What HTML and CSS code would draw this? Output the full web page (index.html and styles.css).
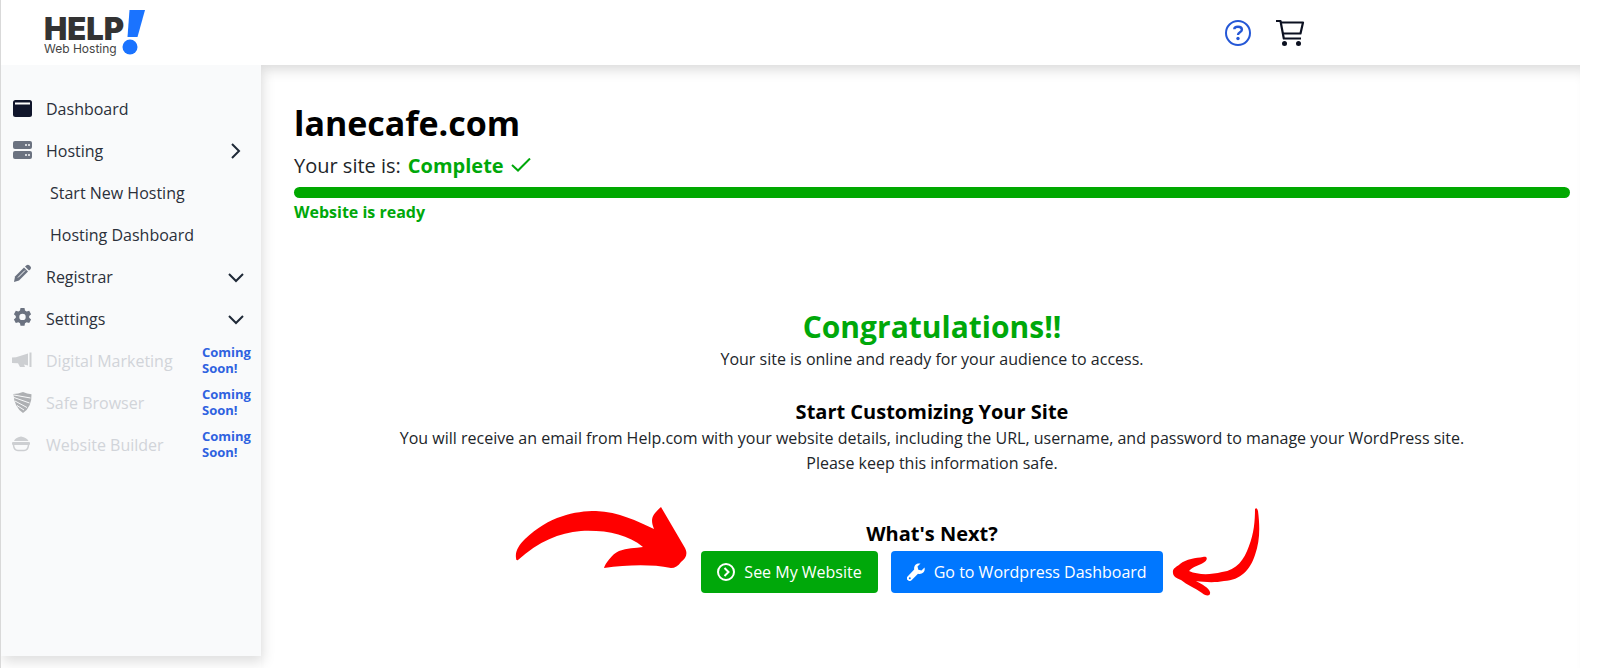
FILE: index.html
```html
<!DOCTYPE html>
<html lang="en">
<head>
<meta charset="utf-8">
<meta name="viewport" content="width=device-width, initial-scale=1">
<title>Help Web Hosting - lanecafe.com</title>
<link rel="stylesheet" href="styles.css">
</head>
<body>
<div class="app">
  <header class="topbar">
    <a class="logo" href="#" aria-label="HELP! Web Hosting">
      <span class="logo-words">
        <span class="logo-name">HELP</span>
        <span class="logo-sub">Web Hosting</span>
      </span>
      <svg class="logo-mark" viewBox="0 0 24 46" width="24" height="46" aria-hidden="true">
        <path d="M7.500 0H23L15.500 27H5.500z"/>
        <circle cx="8" cy="37" r="7.500"/>
      </svg>
    </a>
    <nav class="tools" aria-label="Account">
      <a class="tool tool-help" href="#" aria-label="Help">
        <svg viewBox="0 0 26 26" width="26" height="26" fill="none" stroke="currentColor" stroke-width="2">
          <circle cx="13" cy="13" r="12"/>
          <path d="M9.300 9.300C9.300 7.200 11 6.800 13 6.800s3.900.8 3.900 2.900c0 2.600-3.900 2.600-3.900 5.200" stroke-width="2.400"/>
          <circle cx="13" cy="18.500" r="1.700" fill="currentColor" stroke="none"/>
        </svg>
      </a>
      <a class="tool" href="#" aria-label="Cart">
        <svg viewBox="0 0 30 28" width="30" height="28" fill="none" stroke="currentColor" stroke-width="2.200" stroke-linejoin="round">
          <path d="M1 2H5.500L8.800 19.500H26"/>
          <path d="M6 3.500H28L25.500 14.500H7.800"/>
          <circle cx="9.500" cy="24.500" r="2.500" fill="currentColor" stroke="none"/>
          <circle cx="23.500" cy="24.500" r="2.500" fill="currentColor" stroke="none"/>
        </svg>
      </a>
    </nav>
  </header>

  <div class="body">
    <div class="side">
    <nav class="sidebar" aria-label="Main">
      <a class="item" href="#">
        <svg class="icon icon-dark" viewBox="0 0 20 20" width="20" height="20"><rect x="1" y="1" width="19" height="17" rx="2.500"/><path d="M3 3.500H18V5.500H3z" fill="#fff"/></svg>
        <span>Dashboard</span>
      </a>
      <a class="item" href="#">
        <svg class="icon" viewBox="0 0 20 20" width="20" height="20"><rect x="1" y="0" width="19" height="8" rx="2"/><rect x="1" y="10" width="19" height="8" rx="2"/><g fill="#f9fafb"><circle cx="14" cy="4" r="1"/><circle cx="17" cy="4" r="1"/><circle cx="14" cy="14" r="1"/><circle cx="17" cy="14" r="1"/></g></svg>
        <span>Hosting</span>
        <svg class="chevron" viewBox="0 0 16 16" width="16" height="16"><path d="M4 1l7 7-7 7"/></svg>
      </a>
      <a class="item item-sub" href="#"><span>Start New Hosting</span></a>
      <a class="item item-sub" href="#"><span>Hosting Dashboard</span></a>
      <a class="item" href="#">
        <svg class="icon" viewBox="0 0 20 20" width="20" height="20"><g transform="translate(0 -3)"><path d="M3 12.500L12 3.500L16 7.500L7 16.500L2 18z"/><path d="M13 2.500L14.500 1.200Q16 0 17.500 1.500L18.300 2.300Q19.800 3.800 18.500 5.200L17 6.500z"/><path d="M6 13.500L13 6.500" stroke="#f9fafb"/></g></svg>
        <span>Registrar</span>
        <svg class="chevron" viewBox="0 0 16 16" width="16" height="16"><path d="M1 5l7 7 7-7"/></svg>
      </a>
      <a class="item" href="#">
        <svg class="icon" viewBox="0 0 20 20" width="20" height="20"><path transform="translate(0 -2)" fill-rule="evenodd" d="M8.500 1h4l.5 2.600 1.600 1L17.200 3.800l1.900 3.400L17.200 9v1.800l1.900 1.800-1.900 3.400-2.600-.8-1.600 1-.5 2.600h-4L8 16.200l-1.600-1-2.600.8-1.900-3.400 1.900-1.800V9L1.900 7.200l1.900-3.400 2.600.8L8 3.600zM10.500 6.700a3.200 3.200 0 1 0 0 6.400a3.200 3.200 0 1 0 0-6.400z"/></svg>
        <span>Settings</span>
        <svg class="chevron" viewBox="0 0 16 16" width="16" height="16"><path d="M1 5l7 7 7-7"/></svg>
      </a>
      <a class="item item-off" href="#" aria-disabled="true">
        <svg class="icon" viewBox="0 0 20 20" width="20" height="20"><path d="M0 6.500L4 6.200L16 2.500V14.500L12 13.500L13 16H8L6 12.300L0 12zM17.500 1.500H19.500V16H17.500z"/></svg>
        <span>Digital Marketing</span>
        <strong class="soon">Coming Soon!</strong>
      </a>
      <a class="item item-off" href="#" aria-disabled="true">
        <svg class="icon icon-shield" viewBox="0 0 20 22" width="20" height="22"><g transform="translate(0 -1)"><path d="M1.500 3Q6 3 11 1Q15 3 19.500 3.300Q20 16 11 22Q2 16 1.500 3z"/><path d="M2 4L18.500 7M2 6.500L17.500 12M3 10L15 16.500M5 14.500L12 19" stroke="#f9fafb" fill="none"/></g></svg>
        <span>Safe Browser</span>
        <strong class="soon">Coming Soon!</strong>
      </a>
      <a class="item item-off" href="#" aria-disabled="true">
        <svg class="icon" viewBox="0 0 20 20" width="20" height="20"><path d="M2 6Q3 2.500 9 1.500Q15 2.500 16.500 6z"/><rect x="0" y="7" width="18" height="3" rx="1"/><path d="M1.500 10Q2 15.500 6 15.500H12Q16 15.500 16.500 10" fill="none" stroke="currentColor" stroke-width="1.500"/></svg>
        <span>Website Builder</span>
        <strong class="soon">Coming Soon!</strong>
      </a>
    </nav>
    </div>

    <main class="main">
      <h1 class="domain">lanecafe.com</h1>
      <p class="status">Your site is: <strong class="done">Complete</strong>
        <svg class="tick" viewBox="0 0 20 16" width="20" height="16" fill="none" stroke="currentColor" stroke-width="2"><path d="M1 7l6 5.500L19 .5"/></svg>
      </p>
      <div class="progress" role="progressbar" aria-label="Setup progress" aria-valuenow="100" aria-valuemin="0" aria-valuemax="100"></div>
      <p class="ready">Website is ready</p>

      <section class="result">
        <h2 class="congrats">Congratulations!!</h2>
        <p class="text">Your site is online and ready for your audience to access.</p>
        <h3 class="heading">Start Customizing Your Site</h3>
        <p class="text">You will receive an email from Help.com with your website details, including the URL, username, and password to manage your WordPress site.<br>Please keep this information safe.</p>
        <h3 class="heading heading-next">What's Next?</h3>
        <div class="actions">
          <button class="btn btn-green" type="button">
            <svg viewBox="0 0 18 18" width="18" height="18" fill="none" stroke="currentColor" stroke-width="2"><circle cx="9" cy="9" r="8"/><path d="M7.500 5l4 4-4 4"/></svg>
            See My Website
          </button>
          <button class="btn btn-blue" type="button">
            <svg viewBox="0 0 18 18" width="18" height="18" fill="currentColor"><path d="M17.500 4.500L14.500 7.500L11.300 6.700L10.500 3.500L13.500.6C10 -.4 6.500 2 7.200 6.500L.8 13.200A2.400 2.400 0 0 0 4.500 17.200L11 10.700C15.500 11.700 18.600 8.500 17.500 4.500zM2.800 14.200a1 1 0 1 1 0 2a1 1 0 1 1 0-2z" fill-rule="evenodd"/></svg>
            Go to Wordpress Dashboard
          </button>
          <svg class="arrow arrow-left" viewBox="0 0 172 64" width="172" height="64" aria-hidden="true"><path d="M1 51C0 44 4 38 10 32C34 9 60 4 81 4C104 5 122 14 139 22C135 12 137 8 146 0L170 41C173 47 171 51 166 55C163 59 160 61 156 61C135 57 112 58 89 61C90 57 97 47 104 44C112 41 120 41 128 40C112 27 91 23 66 24C44 26 24 34 3 53Q1 54 1 51z"/></svg>
          <svg class="arrow arrow-right" viewBox="0 0 88 90" width="88" height="90" aria-hidden="true"><path d="M83 1Q85-1 86 3C88 19 88 33 83 47C78 62 69 72 52 73C42 75 32 74 24 73C30 76 37 80 38 84C39 89 33 88 30 85C23 80 15 77 9 72C4 70 1 68 1 65C0 60 5 59 8 56C14 51 24 50 31 49C37 48 35 53 31 55C26 58 22 58 17 63C26 67 38 67 50 64C65 62 72 52 77 38C82 25 83 13 83 1z"/></svg>
        </div>
      </section>
    </main>
  </div>
</div>
</body>
</html>
```
FILE: styles.css
```css
* { box-sizing: border-box; }

body {
  margin: 0;
  background: #fff;
  color: #212529;
  font-family: "Open Sans", "Noto Sans", sans-serif;
  font-size: 16px;
  line-height: 25px;
}

h1, h2, h3, p { margin: 0; }
a { color: inherit; text-decoration: none; }
svg { flex: none; display: block; }

.app {
  display: flex;
  flex-direction: column;
  min-height: 100vh;
  margin-right: 20px;
  border-left: 1px solid #d9d9d9;
}

.topbar {
  display: flex;
  align-items: center;
  justify-content: space-between;
  height: 65px;
  padding: 0 275px 0 43px;
}

.logo { display: flex; align-items: flex-start; }
.logo-words { display: flex; flex-direction: column; padding-top: 5px; }
.logo-name {
  color: #333;
  font-family: Inter, sans-serif;
  font-size: 31px;
  font-weight: 900;
  line-height: 28px;
}
.logo-sub {
  color: #444;
  font-family: Inter, sans-serif;
  font-size: 12px;
  line-height: 12px;
}
.logo-mark { margin-left: -2px; fill: #1a73ff; }

.tools { display: flex; align-items: center; gap: 24px; color: #0b1020; }
.tool-help { color: #2457d6; }

.body { display: flex; flex: 1; }

.side { display: flex; flex: none; width: 260px; padding-bottom: 12px; }
.sidebar {
  width: 100%;
  padding: 23px 0;
  background: #f9fafb;
  box-shadow: 2px 6px 12px rgba(0, 0, 0, 0.13);
  clip-path: inset(0 -16px -16px 0);
}

.item {
  display: flex;
  align-items: center;
  height: 42px;
  padding: 0 11px;
  gap: 14px;
  color: #2b303a;
}
.item-sub { padding-left: 49px; }
.icon { color: #6b7280; fill: currentColor; overflow: visible; }
.icon-dark { color: #10152b; }
.chevron {
  margin-left: auto;
  margin-right: 6px;
  fill: none;
  stroke: #1f2937;
  stroke-width: 2;
}
.item-off { color: #d1d4d9; }
.item-off .icon { color: #cdcfd2; }
.item-off .icon-shield { color: #aeb0b3; }
.soon {
  width: 48px;
  margin-left: auto;
  padding-bottom: 3px;
  color: #2f62e0;
  font-size: 13px;
  line-height: 16px;
}

.main {
  flex: 1;
  min-width: 0;
  padding: 33px 10px 32px 33px;
  box-shadow: inset 0 14px 14px -10px rgba(0, 0, 0, 0.16);
}

.domain { color: #000; font-size: 34px; line-height: 50px; }
.status { display: flex; align-items: center; gap: 7px; font-size: 20px; line-height: 36px; }
.done, .tick, .ready, .congrats { color: #00a80a; }
.progress { height: 11px; margin-top: 3px; border-radius: 6px; background: #00a800; }
.ready { margin-top: 2px; font-weight: 700; }

.result {
  display: flex;
  flex-direction: column;
  align-items: center;
  margin-top: 82px;
  text-align: center;
}
.congrats { font-size: 30px; line-height: 40px; }
.heading { margin-top: 26px; color: #000; font-size: 20px; line-height: 28px; }
.heading-next { margin-top: 44px; }

.actions { position: relative; display: flex; gap: 13px; margin-top: 3px; }
.btn {
  display: flex;
  align-items: center;
  gap: 9px;
  height: 42px;
  padding: 0 16px;
  border: 0;
  border-radius: 4px;
  color: #fff;
  font: inherit;
}
.btn-green { background: #00a80a; }
.btn-blue { background: #0077ff; }

.arrow { position: absolute; fill: #f00; }
.arrow-left { right: 100%; bottom: 22px; margin-right: 14px; }
.arrow-right { left: 100%; bottom: -5px; margin-left: 9px; }
```
